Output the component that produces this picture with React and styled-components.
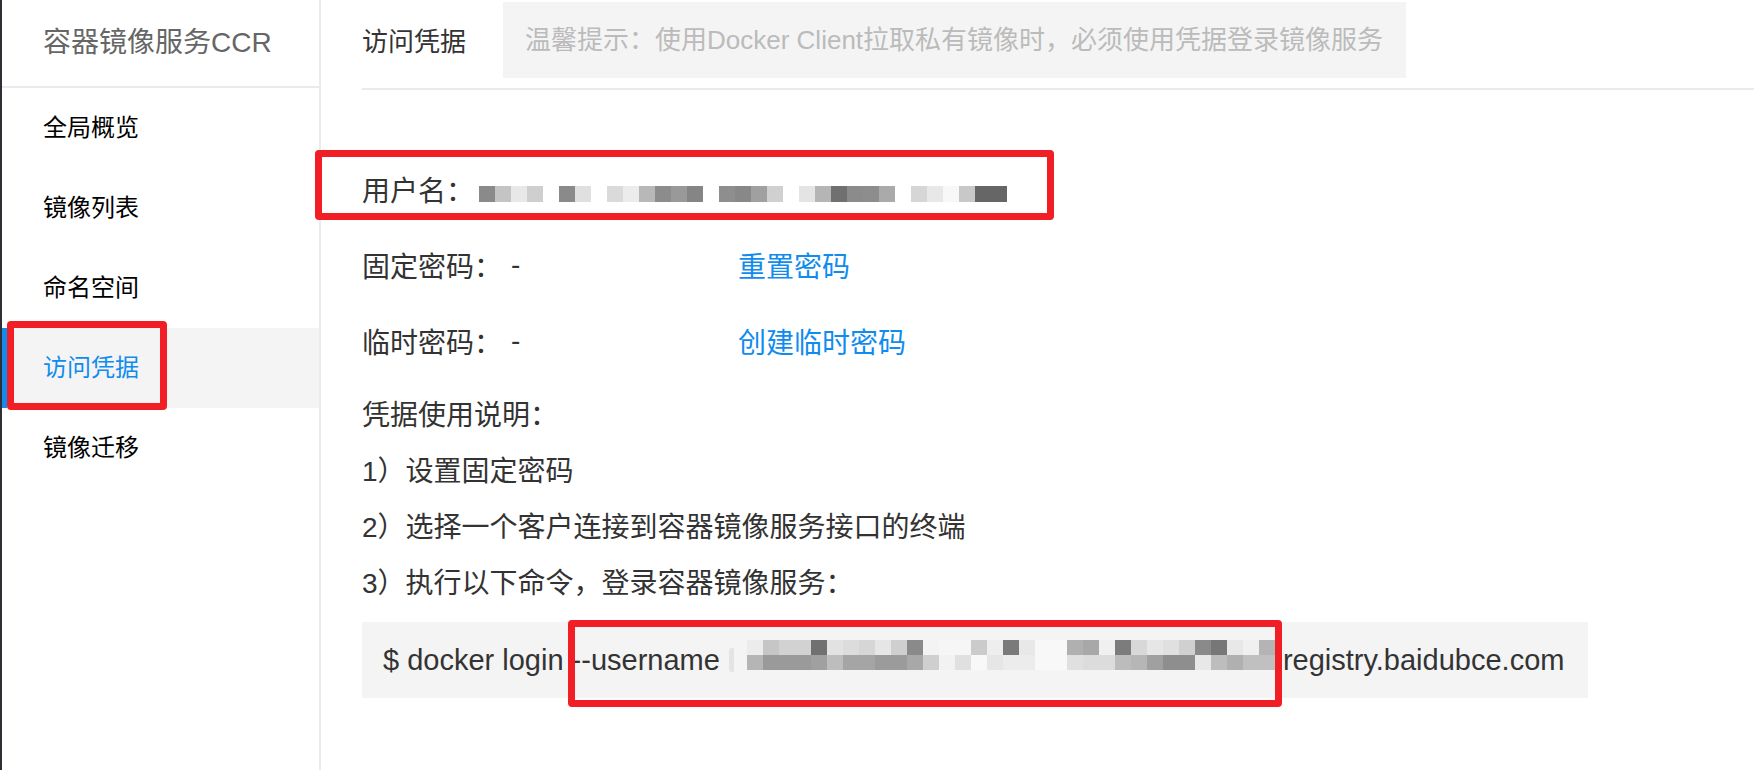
import React from "react";
import styled, { createGlobalStyle } from "styled-components";

const GlobalStyle = createGlobalStyle`
  html, body {
    margin: 0;
    padding: 0;
    background: #fff;
  }
  body {
    font-family: "Liberation Sans", "Noto Sans CJK SC", sans-serif;
  }
`;

// redacted parts of the screenshot, drawn as grey mosaics
const userCells = [
  ["#8a8a8a", "#c4c4c4", "#e8e8e8", "#cfcfcf", null,
   "#8a8a8a", "#e0e0e0", null,
   "#dadada", "#ececec", "#b8b8b8", "#8c8c8c", "#999999", "#858585", null,
   "#8e8e8e", "#888888", "#a0a0a0", "#d0d0d0", null,
   "#e4e4e4", "#b5b5b5", "#707070", "#8b8b8b", "#8d8d8d", "#aaaaaa", null,
   "#d6d6d6", "#e8e8e8", "#f8f8f8", "#c8c8c8", "#666666", "#666666"],
];

const cmdCells = [
  ["#ececec", "#c6c6c6", "#d2d2d2", "#d2d2d2", "#707070", "#e2e2e2", "#dcdcdc", "#d6d6d6",
   "#e6e6e6", "#cfcfcf", "#8a8a8a", "#f3f3f3", "#f6f6f6", "#f6f6f6", "#cbcbcb", "#eeeeee",
   "#7a7a7a", "#e8e8e8", "#f8f8f8", "#f8f8f8", "#b0b0b0", "#a8a8a8", "#f0f0f0", "#7c7c7c",
   "#d8d8d8", "#e6e6e6", "#e0e0e0", "#d0d0d0", "#8a8a8a", "#777777", "#e8e8e8", "#f0f0f0", "#b4b4b4"],
  ["#b5b5b5", "#9a9a9a", "#9a9a9a", "#9a9a9a", "#a0a0a0", "#bdbdbd", "#a5a5a5", "#a5a5a5",
   "#9b9b9b", "#9b9b9b", "#a8a8a8", "#cfcfcf", "#f2f2f2", "#e0e0e0", "#f8f8f8", "#e6e6e6",
   "#ececec", "#ececec", "#f8f8f8", "#f8f8f8", "#e0e0e0", "#dcdcdc", "#dcdcdc", "#bcbcbc",
   "#b6b6b6", "#a0a0a0", "#8e8e8e", "#8e8e8e", "#e8e8e8", "#bdbdbd", "#b0b0b0", "#c0c0c0", "#c0c0c0"],
];

const navItems = ["全局概览", "镜像列表", "命名空间", "访问凭据", "镜像迁移"];

const Mosaic = ({ rows, cw = 16, ch = 16, className }) => (
  <svg
    className={className}
    width={rows[0].length * cw}
    height={rows.length * ch}
    viewBox={`0 0 ${rows[0].length * cw} ${rows.length * ch}`}
  >
    {rows.map((row, r) =>
      row.map((c, i) =>
        c ? <rect key={r + "-" + i} x={i * cw} y={r * ch} width={cw} height={ch} fill={c} /> : null
      )
    )}
  </svg>
);

export default function App() {
  return (
    <>
      <GlobalStyle />
      <Page>
        <Sidebar>
          <SideHeader>容器镜像服务CCR</SideHeader>
          {navItems.map((item) => (
            <NavItem key={item} $active={item === "访问凭据"}>
              {item}
              {item === "访问凭据" && <Mark $l={5} $t={-7} $w={160} $h={89} />}
            </NavItem>
          ))}
        </Sidebar>

        <Main>
          <Header>
            <HeaderTitle>访问凭据</HeaderTitle>
            <Hint>温馨提示：使用Docker Client拉取私有镜像时，必须使用凭据登录镜像服务</Hint>
          </Header>

          <Body>
            <InfoRow>
              <Label>用户名：</Label>
              <UserMosaic rows={userCells} />
              <Mark $l={-47} $t={-1} $w={739} $h={70} />
            </InfoRow>
            <InfoRow>
              <Label>固定密码：</Label>
              <Value>-</Value>
              <Link>重置密码</Link>
            </InfoRow>
            <InfoRow>
              <Label>临时密码：</Label>
              <Value>-</Value>
              <Link>创建临时密码</Link>
            </InfoRow>

            <Steps>
              <Line>凭据使用说明：</Line>
              <Line>1）设置固定密码</Line>
              <Line>2）选择一个客户连接到容器镜像服务接口的终端</Line>
              <Line>3）执行以下命令，登录容器镜像服务：</Line>
            </Steps>

            <CodeBlock>
              <span>$ docker login --username</span>
              <Blur />
              <CmdMosaic rows={cmdCells} ch={15} />
              <span>registry.baidubce.com</span>
              <Mark $l={206} $t={-2} $w={714} $h={87} />
            </CodeBlock>
          </Body>
        </Main>
      </Page>
    </>
  );
}

const Page = styled.div`
  display: flex;
  height: 770px;
  border-left: 2px solid #2e2e34;
  box-sizing: border-box;
  overflow: hidden;
`;

const Sidebar = styled.aside`
  width: 319px;
  flex-shrink: 0;
  box-sizing: border-box;
  border-right: 2px solid #ebebeb;
`;

const SideHeader = styled.div`
  height: 88px;
  box-sizing: border-box;
  padding: 0 0 6px 41px;
  display: flex;
  align-items: center;
  border-bottom: 2px solid #e8eaed;
  font-size: 28px;
  color: #666;
  white-space: nowrap;
`;

const NavItem = styled.div`
  position: relative;
  height: 80px;
  line-height: 80px;
  padding-left: 41px;
  font-size: 24px;
  color: ${(p) => (p.$active ? "#108cee" : "#000")};
  background: ${(p) => (p.$active ? "#f4f4f4" : "transparent")};
  box-shadow: ${(p) => (p.$active ? "inset 5px 0 0 #108cee" : "none")};
`;

// red annotation frames drawn over the screenshot
const Mark = styled.div`
  position: absolute;
  left: ${(p) => p.$l}px;
  top: ${(p) => p.$t}px;
  width: ${(p) => p.$w}px;
  height: ${(p) => p.$h}px;
  box-sizing: border-box;
  border: 7px solid #f11f25;
  border-radius: 4px;
  pointer-events: none;
`;

const Main = styled.main`
  flex: 1;
  min-width: 0;
  padding-left: 41px;
`;

const Header = styled.div`
  display: flex;
  align-items: flex-start;
  height: 88px;
  border-bottom: 2px solid #e8eaed;
`;

const HeaderTitle = styled.div`
  font-size: 26px;
  line-height: 84px;
  color: #333;
  margin-right: 37px;
  white-space: nowrap;
`;

const Hint = styled.div`
  margin-top: 2px;
  width: 903px;
  height: 76px;
  box-sizing: border-box;
  padding-left: 22px;
  background: #f4f4f4;
  color: #bbb;
  font-size: 26px;
  line-height: 76px;
  white-space: nowrap;
  overflow: hidden;
`;

const Body = styled.div`
  padding-top: 61px;
`;

const InfoRow = styled.div`
  position: relative;
  display: flex;
  align-items: center;
  height: 76px;
  font-size: 28px;
  color: #333;
  white-space: nowrap;
`;

const Label = styled.span`
  flex-shrink: 0;
`;

const Value = styled.span`
  margin-left: 9px;
  width: 227px;
  flex-shrink: 0;
`;

const Link = styled.a`
  color: #108cee;
  cursor: pointer;
`;

const UserMosaic = styled(Mosaic)`
  margin: 10px 0 0 5px;
`;

const Steps = styled.div`
  margin-top: 9px;
`;

const Line = styled.div`
  font-size: 28px;
  line-height: 56px;
  color: #333;
  white-space: nowrap;
`;

const CodeBlock = styled.div`
  position: relative;
  margin-top: 10px;
  width: 1226px;
  height: 76px;
  box-sizing: border-box;
  padding-left: 21px;
  display: flex;
  align-items: center;
  background: #f4f4f4;
  font-size: 29px;
  color: #333;
  white-space: nowrap;
`;

// faint smear left of the mosaic
const Blur = styled.span`
  width: 5px;
  height: 24px;
  margin: 0 0 0 9px;
  border-radius: 3px 0 0 3px;
  background: #e4e4e4;
  flex-shrink: 0;
`;

const CmdMosaic = styled(Mosaic)`
  margin: 0 8px 10px 13px;
  flex-shrink: 0;
`;
